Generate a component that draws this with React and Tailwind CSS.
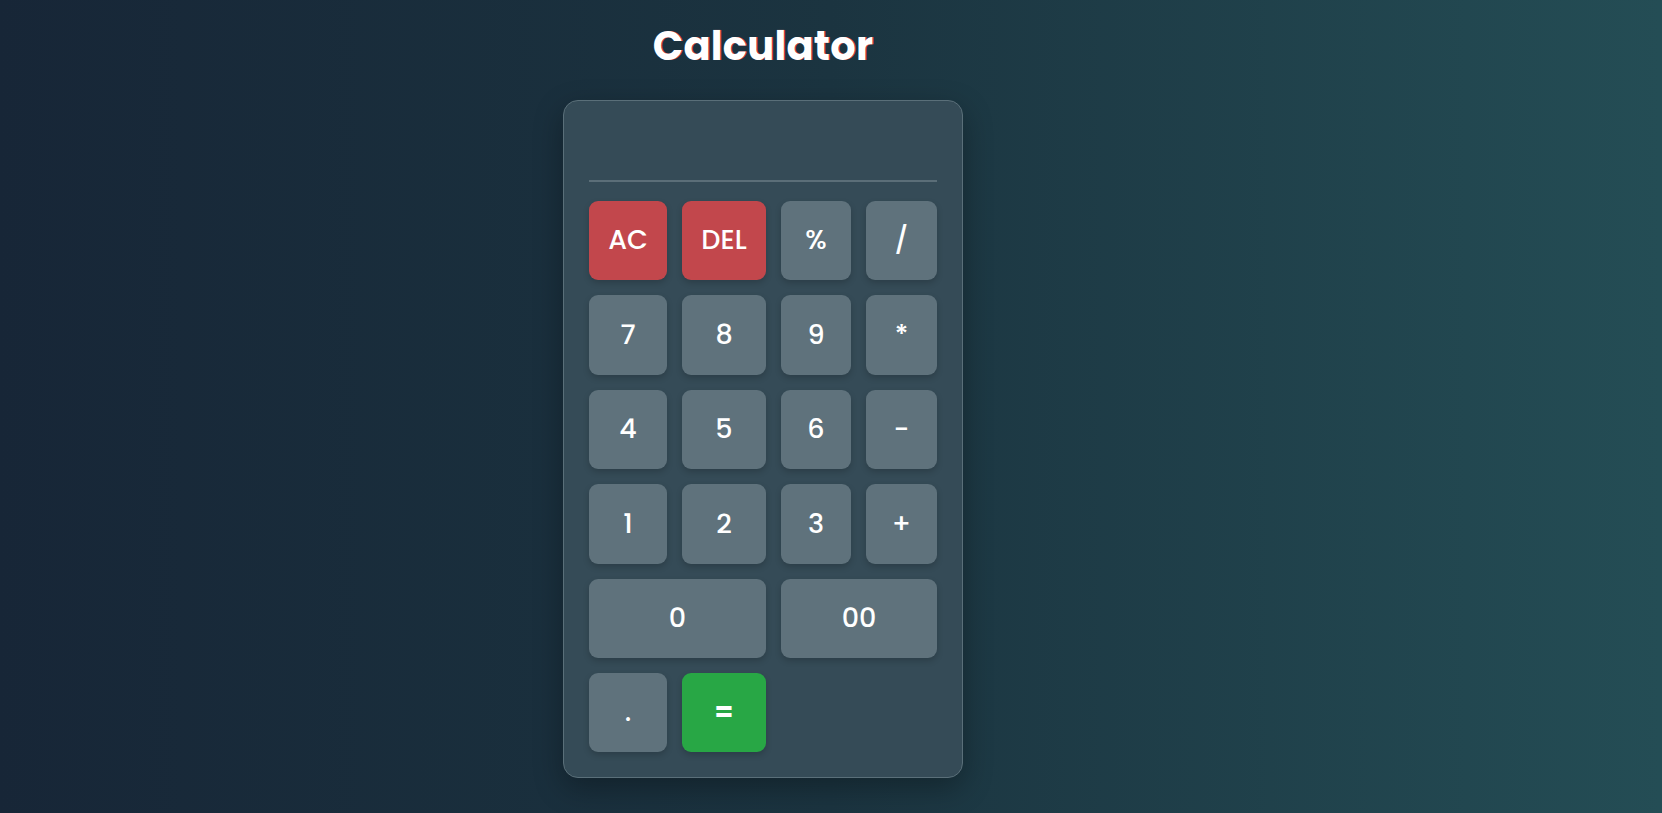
import { useState } from 'react';

const KEYS = [
  { label: 'AC', kind: 'danger' },
  { label: 'DEL', kind: 'danger' },
  { label: '%' },
  { label: '/' },
  { label: '7' },
  { label: '8' },
  { label: '9' },
  { label: '*' },
  { label: '4' },
  { label: '5' },
  { label: '6' },
  { label: '-' },
  { label: '1' },
  { label: '2' },
  { label: '3' },
  { label: '+' },
  { label: '0', span: 'col-span-2' },
  { label: '00', span: 'col-span-2' },
  { label: '.' },
  { label: '=', kind: 'equal' },
];

const KIND_CLASSES = {
  danger: 'bg-[#c2474c] hover:bg-[#cf5257] font-medium',
  equal: 'bg-[#28a745] hover:bg-[#2fb94f] font-bold',
  default: 'bg-[#5f727c] hover:bg-[#6a7e88] font-medium',
};

const Key = ({ item, onPress }) => {
  const colors = KIND_CLASSES[item.kind] || KIND_CLASSES.default;
  return (
    <button
      onClick={() => onPress(item.label)}
      className={`h-[79.4px] rounded-[9px] text-white text-[27px] shadow-[0_3px_6px_rgba(0,0,0,0.18)] transition-colors ${colors} ${item.span || ''}`}
    >
      {item.label}
    </button>
  );
};

export default function App() {
  const [value, setValue] = useState('');

  const press = (label) => {
    if (label === 'AC') return setValue('');
    if (label === 'DEL') return setValue((v) => v.slice(0, -1));
    if (label === '=') {
      try {
        // eslint-disable-next-line no-new-func
        const result = Function(`return (${value.replace(/%/g, '/100')})`)();
        setValue(String(result));
      } catch {
        setValue('Error');
      }
      return;
    }
    setValue((v) => v + label);
  };

  return (
    <div
      className="min-h-screen bg-gradient-to-r from-[#172637] via-[#1b3440] to-[#244d55] flex flex-col items-center pr-[136px] pt-[22px]"
      style={{ fontFamily: 'Poppins, Inter, "Noto Sans", sans-serif' }}
    >
      <h1 className="text-[40px] leading-[48px] font-bold text-white tracking-[0.2px] [text-shadow:1px_0_0_#d8343a]">
        Calculator
      </h1>

      <div className="mt-[30px] w-[400px] rounded-[15px] border border-[#5a6f79] bg-[#354b57] p-[25px] shadow-[0_10px_30px_rgba(0,0,0,0.3)]">
        <div className="h-[56px] border-b-2 border-[#5b6e78] flex items-end justify-end pb-1 text-white text-3xl font-medium overflow-hidden">
          {value}
        </div>

        <div className="mt-[19px] grid grid-cols-[78px_84px_70px_71px] gap-x-[15px] gap-y-[15px]">
          {KEYS.map((item) => (
            <Key key={item.label} item={item} onPress={press} />
          ))}
        </div>
      </div>
    </div>
  );
}
